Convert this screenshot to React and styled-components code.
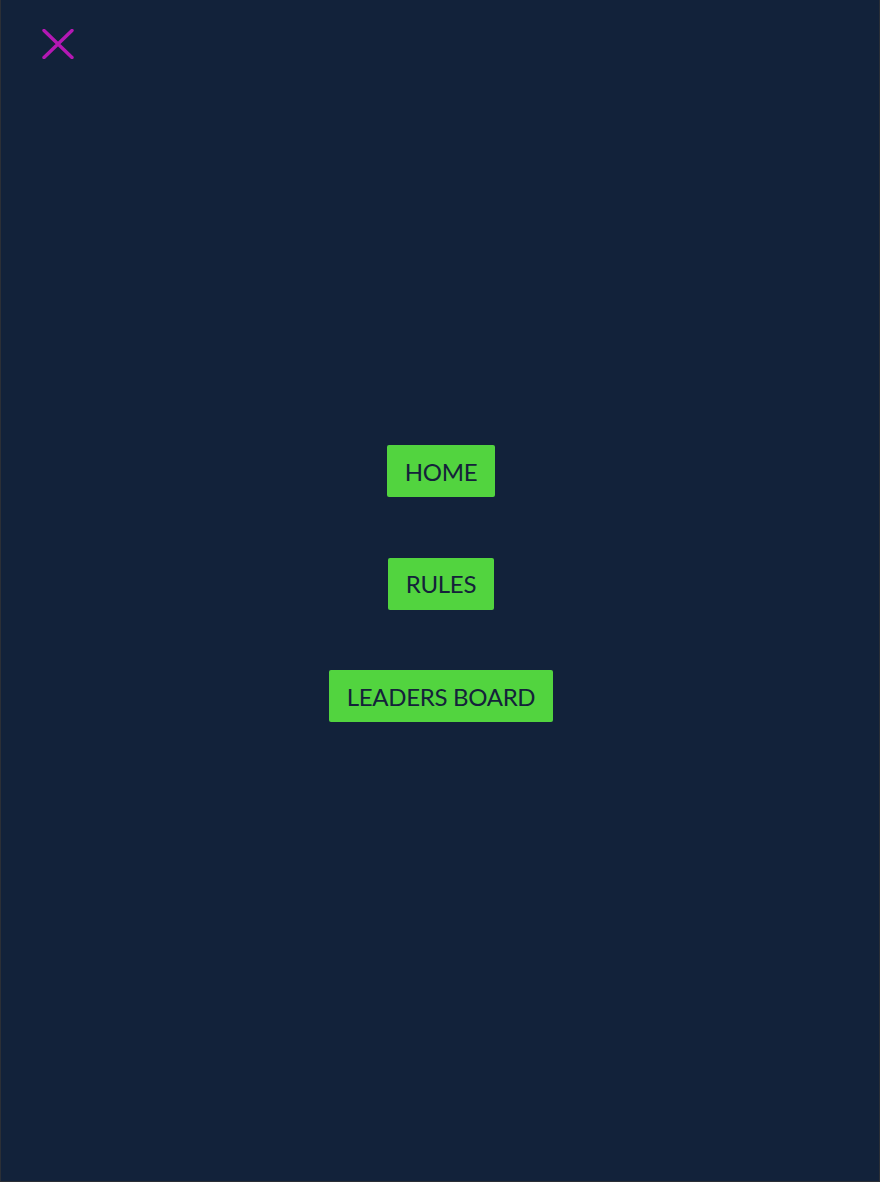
import React from "react";
import styled, { createGlobalStyle } from "styled-components";

const GlobalStyle = createGlobalStyle`
  html, body {
    margin: 0;
    padding: 0;
    background: #12223a;
  }
  * {
    box-sizing: border-box;
  }
`;

const Overlay = styled.div`
  min-height: 100vh;
  background: #12223a;
  border: 1px solid #2b2f36;
  border-top: none;
  font-family: Lato, "Open Sans", sans-serif;
`;

const Header = styled.header`
  padding: 29px 0 0 40px;
  height: 58px;
`;

const CloseButton = styled.button`
  display: block;
  width: 34px;
  height: 30px;
  padding: 0;
  border: none;
  background: transparent;
  cursor: pointer;
  svg {
    display: block;
  }
`;

const Menu = styled.nav`
  display: flex;
  flex-direction: column;
  align-items: center;
  gap: 60.5px;
  padding: 387px 0 0 2px;
`;

const MenuButton = styled.a`
  display: inline-flex;
  align-items: center;
  justify-content: center;
  height: 52px;
  padding: 0 18px;
  background: #52d43f;
  color: #14223a;
  border-radius: 2px;
  font-size: 24px;
  text-transform: uppercase;
  text-decoration: none;
  letter-spacing: -0.3px;
  cursor: pointer;
`;

const items = ["Home", "Rules", "Leaders Board"];

export default function App() {
  return (
    <>
      <GlobalStyle />
      <Overlay>
        <Header>
          <CloseButton aria-label="close">
            <svg width="34" height="30" viewBox="0 0 34 30">
              <path
                d="M3 1.5 L31 28.5 M31 1.5 L3 28.5"
                stroke="#b418b4"
                strokeWidth="3.4"
                strokeLinecap="round"
              />
            </svg>
          </CloseButton>
        </Header>
        <Menu>
          {items.map(title => (
            <MenuButton key={title}>{title}</MenuButton>
          ))}
        </Menu>
      </Overlay>
    </>
  );
}
